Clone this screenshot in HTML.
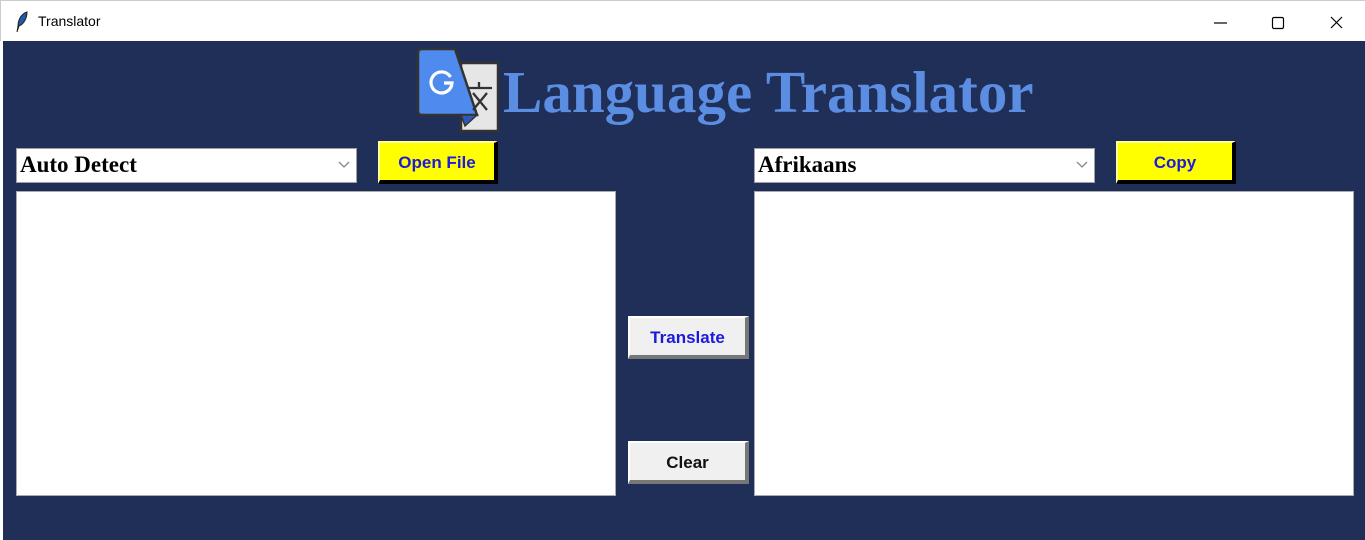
<!DOCTYPE html>
<html><head><meta charset="utf-8"><style>
*{margin:0;padding:0;box-sizing:border-box}
body{width:1365px;height:540px;overflow:hidden;background:#fff;font-family:"Liberation Sans",sans-serif;position:relative}
.win{position:absolute;left:3px;top:41px;width:1362px;height:499px;background:#1f2f58}
.tb{position:absolute;left:0;top:0;width:1365px;height:41px;background:#fff;border-top:1px solid #ccc;border-left:1px solid #ccc}
.a{position:absolute}
.combo{position:absolute;background:#fff;border:1px solid #a0a0a0;font-family:"Liberation Serif",serif;font-weight:bold;font-size:23px;padding-left:3px;line-height:32px;color:#000}
.combo svg{position:absolute;right:6px;top:12px}
.ta{position:absolute;background:#fff;border:1px solid #aaa}
.btn{position:absolute;font-weight:bold;font-size:17px;text-align:center;border-style:solid;border-width:2px 4px 4px 2px}
.y{background:#ffff00;color:#1a1ae0;border-color:#ffff99 #000 #000 #ffff99}
.g{background:#f0f0f0;border-color:#fff #777 #777 #fff}
</style></head><body>
<div class="tb">
<svg class="a" style="left:14px;top:10px" width="14" height="22" viewBox="0 0 14 22"><path d="M12 1C6 3 3 9 3 15L2 21L4 15C9 13 12 7 12 1Z" fill="#1e5aa8" stroke="#222" stroke-width="1"/></svg>
<div class="a" style="left:37px;top:12px;font-size:14px;color:#000">Translator</div>
<svg class="a" style="left:1210px;top:12px" width="140" height="20"><line x1="3" y1="10" x2="16" y2="10" stroke="#000" stroke-width="1.2"/><rect x="61.5" y="4.5" width="11" height="11" rx="1.5" fill="none" stroke="#000" stroke-width="1.2"/><path d="M120 4L131 15M131 4L120 15" stroke="#000" stroke-width="1.2"/></svg>
</div>
<div class="win"></div>
<svg class="a" style="left:415px;top:47px" width="88" height="86" viewBox="0 0 88 86">
<rect x="46" y="16" width="37" height="68" fill="#e6e6e6" stroke="#333" stroke-width="2.5"/>
<path d="M7 2H40L62 68H7Q3 68 3 64V6Q3 2 7 2Z" fill="#4f8bee" stroke="#333" stroke-width="2.5"/>
<path d="M46 68H62L50 79Z" fill="#2f57b8" stroke="#333" stroke-width="1.5"/>
<path d="M35.5 30A10.5 10.5 0 1 0 37 36H29" fill="none" stroke="#fff" stroke-width="3.2"/>
<path d="M64 35V40M53 41H77M58 46L72 63M72 46L58 63" stroke="#333" stroke-width="2.3" fill="none"/>
</svg>
<div class="a" style="left:503px;top:55px;font-family:'Liberation Serif',serif;font-weight:bold;font-size:59px;color:#5b8de3;white-space:nowrap;line-height:74px">Language Translator</div>
<div class="combo" style="left:16px;top:148px;width:341px;height:35px">Auto Detect<svg width="12" height="8"><path d="M1 1L6 6L11 1" fill="none" stroke="#888" stroke-width="1.3"/></svg></div>
<div class="combo" style="left:754px;top:148px;width:341px;height:35px">Afrikaans<svg width="12" height="8"><path d="M1 1L6 6L11 1" fill="none" stroke="#888" stroke-width="1.3"/></svg></div>
<div class="btn y" style="left:378px;top:141px;width:120px;height:43px;line-height:40px">Open File</div>
<div class="btn y" style="left:1116px;top:141px;width:120px;height:43px;line-height:40px">Copy</div>
<div class="ta" style="left:16px;top:191px;width:600px;height:305px"></div>
<div class="ta" style="left:754px;top:191px;width:600px;height:305px"></div>
<div class="btn g" style="left:628px;top:316px;width:121px;height:43px;line-height:40px;color:#1a1ae0">Translate</div>
<div class="btn g" style="left:628px;top:441px;width:121px;height:43px;line-height:40px;color:#111">Clear</div>
</body></html>
